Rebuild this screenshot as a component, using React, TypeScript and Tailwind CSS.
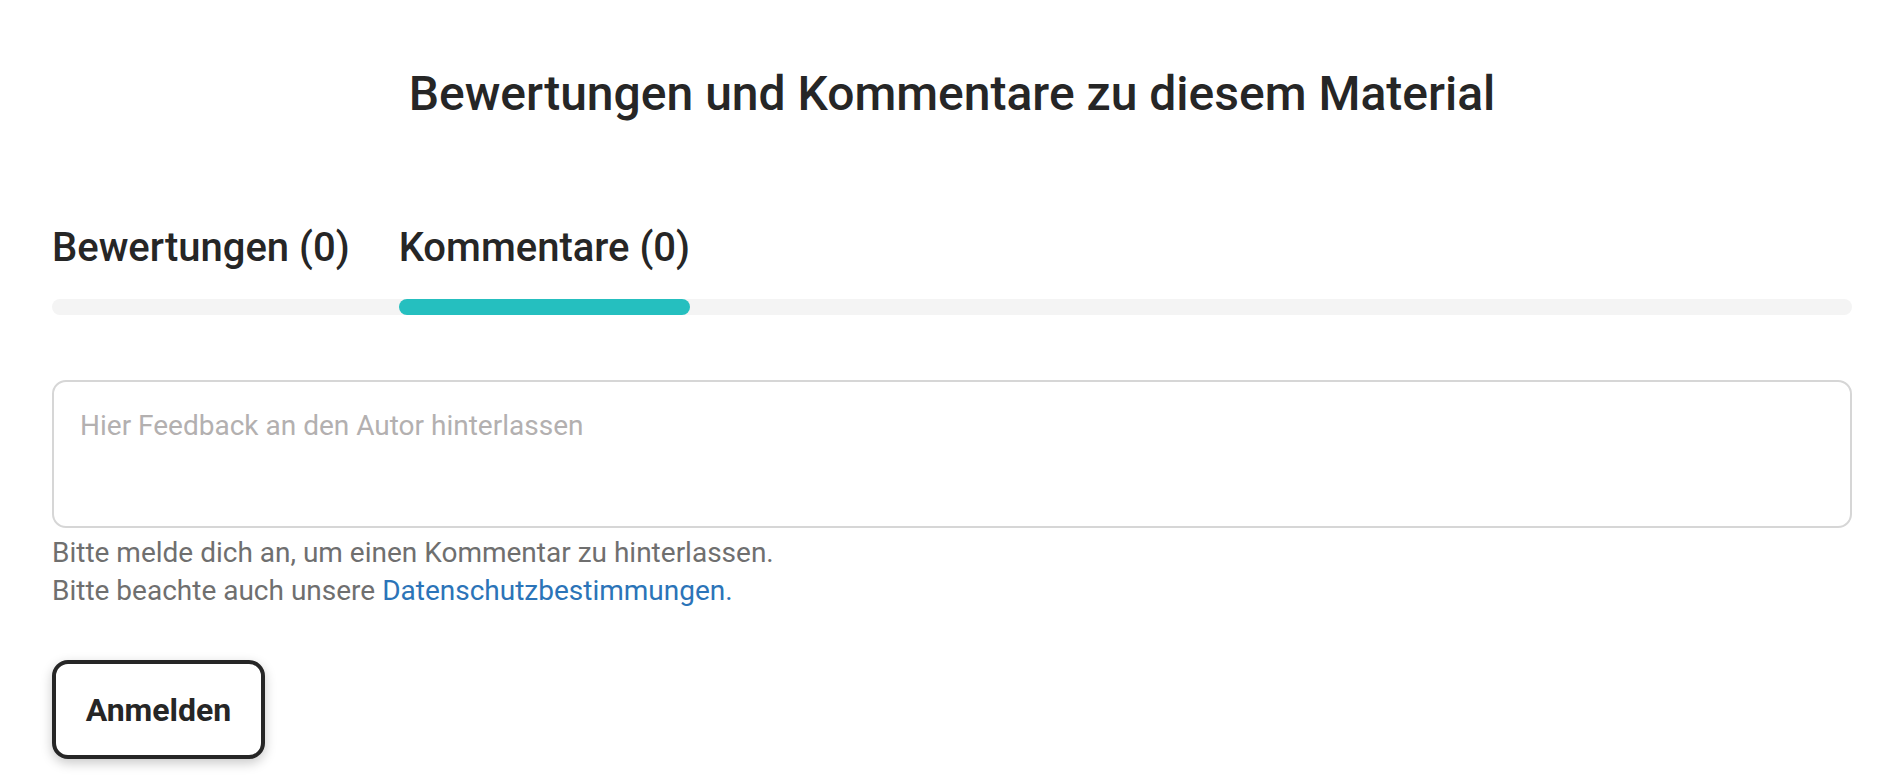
import React from "react";

const App = () => {
  return (
    <div className="min-h-screen bg-white font-['Roboto',sans-serif] text-[#262626]">
      <div className="mx-auto max-w-[1800px] pt-[65px] pb-10">
        <h2 className="text-center text-[48px] font-medium leading-[58px]">
          Bewertungen und Kommentare zu diesem Material
        </h2>

        <div className="mt-[101px]">
          <div className="flex gap-[49px] text-[40px] font-medium leading-[48px]">
            <button className="text-[#262626]">Bewertungen (0)</button>
            <button className="text-[#262626]">Kommentare (0)</button>
          </div>
          <div className="mt-[27px] flex h-4 rounded-full bg-[#f4f4f4]">
            <div className="ml-[347px] w-[291px] rounded-full bg-[#25bfbf]" />
          </div>
        </div>

        <textarea
          className="mt-[65px] block h-[148px] w-full resize-none rounded-[14px] border-2 border-[#d6d6d6] bg-white px-[26px] pt-[25px] text-[28px] leading-[38px] text-[#262626] outline-none placeholder:text-[#b3b0b0]"
          placeholder="Hier Feedback an den Autor hinterlassen"
        />

        <div className="mt-[6px] text-[28px] leading-[38px] text-[#6f6f6f]">
          <p>Bitte melde dich an, um einen Kommentar zu hinterlassen.</p>
          <p>
            Bitte beachte auch unsere{" "}
            <a href="#" className="text-[#2b74b8]">
              Datenschutzbestimmungen.
            </a>
          </p>
        </div>

        <button className="mt-[50px] flex h-[99px] w-[213px] items-center justify-center rounded-[16px] border-4 border-[#262626] bg-white text-[32px] font-bold text-[#262626] shadow-[0_4px_12px_rgba(0,0,0,0.22)]">
          Anmelden
        </button>
      </div>
    </div>
  );
};

export default App;
